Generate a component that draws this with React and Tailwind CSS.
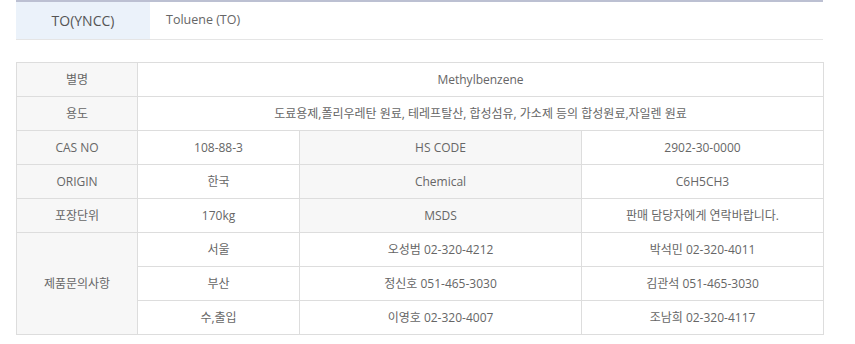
import React from "react";

const font = { fontFamily: '"Open Sans", "Noto Sans CJK KR", sans-serif' };

const L = "border border-[#dddddd] bg-[#f7f7f7] text-center align-middle";
const V = "border border-[#dddddd] bg-white text-center align-middle";

export default function App() {
  return (
    <div className="w-[855px] h-[344px] bg-white text-[12px] text-[#666]" style={font}>
      <div className="ml-[16px] w-[807px]">
        <div className="flex h-[40px] border-t-2 border-t-[#bcc0d2] border-b border-b-[#e5e5e5]">
          <div className="w-[134px] bg-[#ebf2fa] flex items-center justify-center text-[14px] text-[#555]">TO(YNCC)</div>
          <div className="flex items-center pl-[16px] text-[12.5px] text-[#666]">Toluene (TO)</div>
        </div>
        <table className="mt-[22px] w-[807px] border-collapse table-fixed">
          <colgroup>
            <col className="w-[121px]" />
            <col className="w-[162px]" />
            <col className="w-[282px]" />
            <col className="w-[242px]" />
          </colgroup>
          <tbody>
            <tr className="h-[34px]">
              <td className={L}>별명</td>
              <td className={V} colSpan={3}>Methylbenzene</td>
            </tr>
            <tr className="h-[34px]">
              <td className={L}>용도</td>
              <td className={V} colSpan={3}>도료용제,폴리우레탄 원료, 테레프탈산, 합성섬유, 가소제 등의 합성원료,자일렌 원료</td>
            </tr>
            <tr className="h-[34px]">
              <td className={L}>CAS NO</td>
              <td className={V}>108-88-3</td>
              <td className={L}>HS CODE</td>
              <td className={V}>2902-30-0000</td>
            </tr>
            <tr className="h-[34px]">
              <td className={L}>ORIGIN</td>
              <td className={V}>한국</td>
              <td className={L}>Chemical</td>
              <td className={V}>C6H5CH3</td>
            </tr>
            <tr className="h-[34px]">
              <td className={L}>포장단위</td>
              <td className={V}>170kg</td>
              <td className={L}>MSDS</td>
              <td className={V}>판매 담당자에게 연락바랍니다.</td>
            </tr>
            <tr className="h-[34px]">
              <td className={L} rowSpan={3}>제품문의사항</td>
              <td className={V}>서울</td>
              <td className={V}>오성범 02-320-4212</td>
              <td className={V}>박석민 02-320-4011</td>
            </tr>
            <tr className="h-[34px]">
              <td className={V}>부산</td>
              <td className={V}>정신호 051-465-3030</td>
              <td className={V}>김관석 051-465-3030</td>
            </tr>
            <tr className="h-[34px]">
              <td className={V}>수,출입</td>
              <td className={V}>이영호 02-320-4007</td>
              <td className={V}>조남희 02-320-4117</td>
            </tr>
          </tbody>
        </table>
      </div>
    </div>
  );
}
